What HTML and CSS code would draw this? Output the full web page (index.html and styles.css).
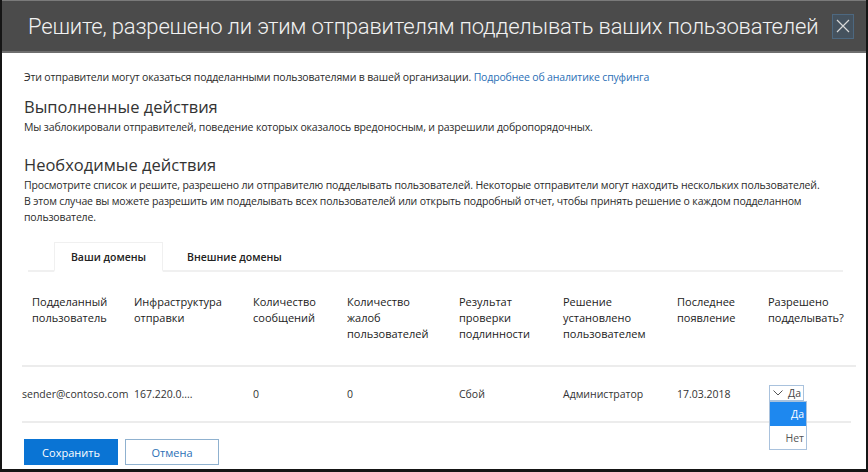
FILE: index.html
```html
<!DOCTYPE html>
<html lang="ru">
<head>
<meta charset="utf-8">
<title>Спуфинг</title>
<link rel="stylesheet" href="styles.css">
</head>
<body>
<div class="frame">
  <header class="hdr">
    <h1 class="title">Решите, разрешено ли этим отправителям подделывать ваших пользователей</h1>
    <button class="close" aria-label="Закрыть">
      <svg width="14" height="14" viewBox="0 0 14 14"><path d="M1 1L13 13M13 1L1 13" stroke="#d8d8d8" stroke-width="1.2" fill="none"/></svg>
    </button>
  </header>
  <main class="content">
    <p class="intro">Эти отправители могут оказаться подделанными пользователями в вашей организации. <a href="#" class="link">Подробнее об аналитике спуфинга</a></p>
    <h2 class="h2">Выполненные действия</h2>
    <p class="txt">Мы заблокировали отправителей, поведение которых оказалось вредоносным, и разрешили добропорядочных.</p>
    <h2 class="h2 h2b">Необходимые действия</h2>
    <p class="txt para">Просмотрите список и решите, разрешено ли отправителю подделывать пользователей. Некоторые отправители могут находить нескольких пользователей. В этом случае вы можете разрешить им подделывать всех пользователей или открыть подробный отчет, чтобы принять решение о каждом подделанном пользователе.</p>

    <div class="tabs">
      <div class="tab active">Ваши домены</div>
      <div class="tab">Внешние домены</div>
    </div>

    <div class="table">
      <div class="grid thead">
        <div class="c1">Подделанный пользователь</div>
        <div>Инфраструктура отправки</div>
        <div>Количество сообщений</div>
        <div>Количество жалоб пользователей</div>
        <div>Результат проверки подлинности</div>
        <div>Решение установлено пользователем</div>
        <div>Последнее появление</div>
        <div>Разрешено подделывать?</div>
      </div>
      <div class="grid trow">
        <div>sender@contoso.com</div>
        <div>167.220.0....</div>
        <div>0</div>
        <div>0</div>
        <div>Сбой</div>
        <div>Администратор</div>
        <div>17.03.2018</div>
        <div class="selcell">
          <div class="sel">
            <svg class="chev" width="10" height="6" viewBox="0 0 10 6"><path d="M0.5 0.5L5 5L9.5 0.5" stroke="#555" stroke-width="1" fill="none"/></svg>
            <span>Да</span>
          </div>
          <ul class="menu">
            <li class="opt on">Да</li>
            <li class="opt">Нет</li>
          </ul>
        </div>
      </div>
    </div>

    <div class="actions">
      <button class="btn primary">Сохранить</button>
      <button class="btn secondary">Отмена</button>
    </div>
  </main>
</div>
</body>
</html>
```
FILE: styles.css
```css
* { box-sizing: border-box; }
html, body { margin: 0; padding: 0; background: #fff; }
body { font-family: "Open Sans", "Noto Sans", sans-serif; color: #333; }

.frame {
  width: 868px;
  height: 472px;
  border-left: 2px solid #151515;
  border-right: 2px solid #151515;
  border-bottom: 3px solid #151515;
  overflow: hidden;
  display: flex;
  flex-direction: column;
}

.hdr {
  height: 53px;
  flex: none;
  background: #4b4b4b;
  border-top: 1px solid #7a7a7a;
  border-bottom: 2px solid #6e6e6e;
  display: flex;
  align-items: center;
  padding: 0 12px 0 26px;
}
.title {
  margin: 0;
  flex: 1;
  font-family: Roboto, "Open Sans", sans-serif;
  font-weight: 300;
  font-size: 22px;
  color: #f2f2f2;
  white-space: nowrap;
  letter-spacing: -0.18px;
}
.close {
  width: 22px;
  height: 25px;
  padding: 0;
  border: 1px solid #4d6880;
  background: #45525e;
  display: flex;
  align-items: center;
  justify-content: center;
}

.content {
  padding: 16px 10px 0 22px;
  flex: 1;
}
.intro {
  margin: 0;
  font-size: 10.5px;
  letter-spacing: -0.15px;
  line-height: 16px;
  color: #2b2b2b;
}
.link { color: #2b6fb6; text-decoration: none; }
.h2 {
  margin: 11px 0 1px;
  font-size: 16.5px;
  line-height: 22px;
  font-weight: 400;
  color: #333;
}
.h2b { margin-top: 19px; }
.txt {
  margin: 0;
  font-size: 10.5px;
  letter-spacing: -0.15px;
  line-height: 16px;
  color: #2b2b2b;
}
.para { width: 797px; }

.tabs {
  margin: 17px 0 0 4px;
  width: 815px;
  height: 30px;
  display: flex;
  padding-left: 26px;
  border-bottom: 2px solid #f0f0f0;
}
.tab {
  height: 30px;
  display: flex;
  align-items: center;
  justify-content: center;
  font-size: 10.5px;
  font-weight: 600;
  color: #222;
  padding: 0 22px;
}
.tab.active {
  width: 109px;
  background: #fff;
  border: 1px solid #f0f0f0;
  border-bottom: 2px solid #fff;
  height: 30px;
  margin-bottom: -2px;
  padding: 0;
}
.tab:not(.active) { padding-left: 24px; }

.table { margin: 22px 0 0 -2px; width: 834px; }
.grid {
  display: grid;
  grid-template-columns: 112px 119px 94px 112px 104px 114px 91px 1fr;
}
.thead {
  font-size: 11px;
  line-height: 16px;
  color: #222;
  padding-bottom: 23px;
  border-bottom: 2px solid #ececec;
}
.thead .c1 { padding-left: 10px; padding-right: 20px; }
.thead > div { padding-right: 14px; }
.trow {
  height: 56px;
  align-items: center;
  font-size: 10.5px;
  color: #333;
  border-bottom: 2px solid #ececec;
  width: 829px;
}

.selcell { position: relative; height: 16px; }
.sel {
  position: absolute;
  left: 1px;
  top: -1px;
  width: 35px;
  height: 16px;
  border: 1px solid #a9c2dd;
  display: flex;
  align-items: center;
  gap: 5px;
  padding-left: 3px;
  font-size: 10.5px;
  color: #444;
  background: #fff;
}
.chev { flex: none; }
.menu {
  position: absolute;
  left: 1px;
  top: 15px;
  width: 38px;
  margin: 0;
  padding: 0;
  list-style: none;
  border: 1px solid #a9c2dd;
  background: #fff;
  z-index: 2;
}
.opt {
  height: 23px;
  display: flex;
  align-items: center;
  justify-content: flex-end;
  padding-right: 2px;
  font-size: 10.5px;
  color: #555;
}
.opt.on { background: #1e88ef; color: #fff; height: 24px; }

.actions {
  display: flex;
  gap: 7px;
  margin-top: 16px;
}
.btn {
  width: 94px;
  height: 26px;
  font-family: "Open Sans", "Noto Sans", sans-serif;
  font-size: 11px;
  padding: 0;
  cursor: pointer;
}
.primary { background: #0a74d4; color: #fff; border: 1px solid #0a74d4; }
.secondary { background: #fff; color: #2b6fb6; border: 1px solid #8fb1cf; }
```
